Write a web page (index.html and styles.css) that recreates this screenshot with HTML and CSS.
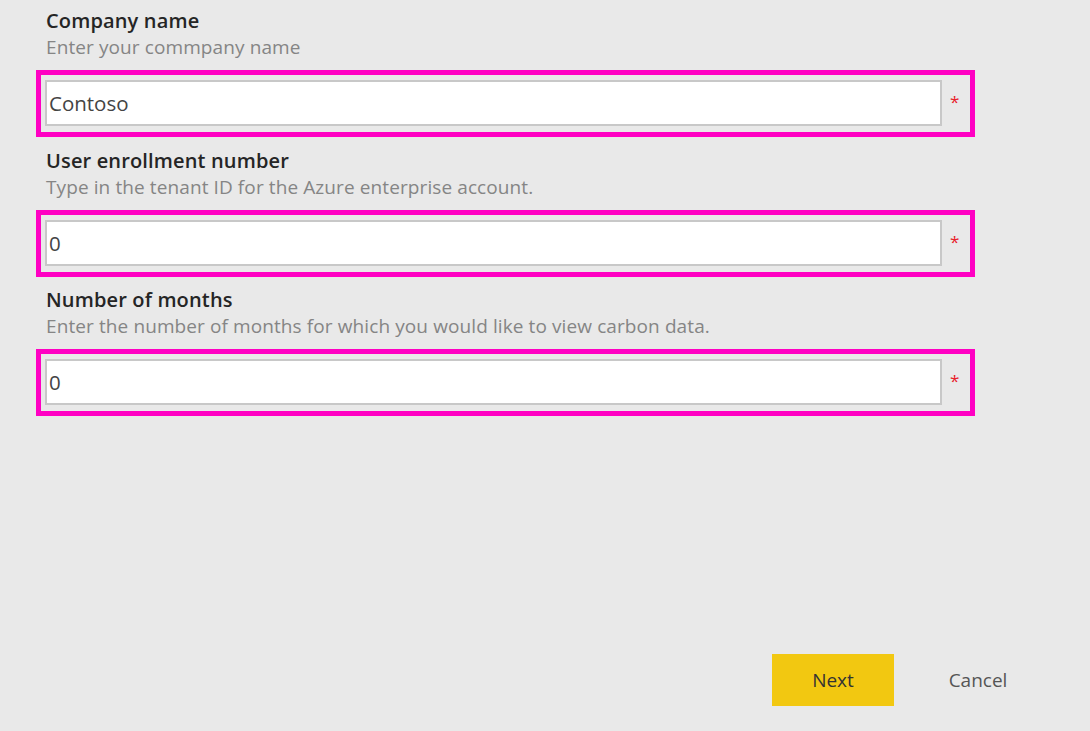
FILE: index.html
```html
<!DOCTYPE html>
<html>
<head>
<meta charset="utf-8">
<link rel="stylesheet" href="styles.css">
</head>
<body>
<div class="page">
  <form class="form">
    <div class="field">
      <div class="label">Company name</div>
      <div class="hint">Enter your commpany name</div>
      <div class="highlight">
        <input class="input" type="text" value="Contoso">
        <span class="req">*</span>
      </div>
    </div>
    <div class="field">
      <div class="label">User enrollment number</div>
      <div class="hint">Type in the tenant ID for the Azure enterprise account.</div>
      <div class="highlight">
        <input class="input" type="text" value="0">
        <span class="req">*</span>
      </div>
    </div>
    <div class="field">
      <div class="label">Number of months</div>
      <div class="hint">Enter the number of months for which you would like to view carbon data.</div>
      <div class="highlight">
        <input class="input" type="text" value="0">
        <span class="req">*</span>
      </div>
    </div>
  </form>
  <div class="footer">
    <button class="btn btn-primary" type="button">Next</button>
    <button class="btn btn-link" type="button">Cancel</button>
  </div>
</div>
</body>
</html>
```

FILE: styles.css
```css
html, body {
  margin: 0;
  padding: 0;
  background: #e9e9e9;
}
body {
  font-family: "Open Sans", "Noto Sans", sans-serif;
  width: 1090px;
  height: 731px;
  overflow: hidden;
}
.page {
  height: 731px;
  display: flex;
  flex-direction: column;
}
.form {
  padding: 7px 0 0 36px;
  width: 939px;
  display: flex;
  flex-direction: column;
  gap: 9.5px;
}
.label {
  padding-left: 10px;
  font-size: 20px;
  font-weight: 600;
  letter-spacing: 0.15px;
  color: #252525;
  line-height: 28px;
  white-space: nowrap;
}
.hint {
  padding-left: 10px;
  font-size: 19px;
  letter-spacing: 0.1px;
  color: #858585;
  line-height: 24px;
  margin-bottom: 11px;
  white-space: nowrap;
}
.highlight {
  border: 5px solid #ff00c3;
  padding: 5px 0 6px 4px;
  display: flex;
  align-items: center;
}
.input {
  box-sizing: border-box;
  width: 897px;
  height: 46px;
  margin: 0;
  border: 2px solid #c8c8c8;
  background: #fff;
  padding: 0 0 0 2px;
  font-family: "Open Sans", "Noto Sans", sans-serif;
  font-size: 20.5px;
  color: #444;
  outline: none;
}
.req {
  color: #e8202a;
  font-size: 17px;
  margin-left: 8px;
  margin-top: -3px;
}
.footer {
  margin-top: auto;
  margin-bottom: 25px;
  display: flex;
  justify-content: flex-end;
  padding-right: 62px;
  gap: 34px;
}
.btn {
  height: 52px;
  border: none;
  font-family: "Open Sans", "Noto Sans", sans-serif;
  font-size: 19px;
  cursor: pointer;
  padding: 0;
}
.btn-primary {
  width: 122px;
  background: #f2c811;
  color: #333;
}
.btn-link {
  width: 100px;
  background: transparent;
  color: #555;
}
```
